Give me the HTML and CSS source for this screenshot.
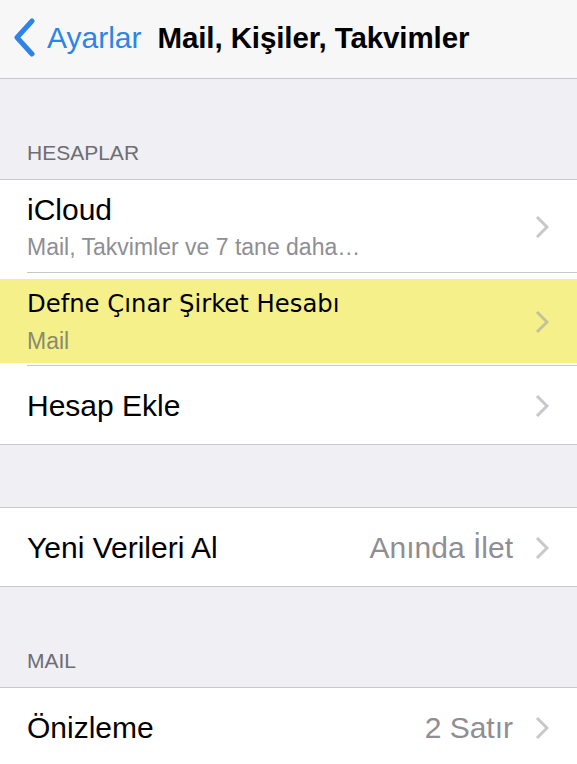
FILE: index.html
```html
<!DOCTYPE html>
<html lang="tr">
<head>
    <meta charset="UTF-8">
    <meta name="viewport" content="width=device-width, initial-scale=1.0">
    <title>Mail, Kişiler, Takvimler</title>
    <link rel="stylesheet" href="styles.css">
</head>
<body>
    <header class="nav">
        <a class="nav-back" href="#">
            <svg class="nav-chevron" width="24" height="40" viewBox="0 0 24 40">
                <polyline points="19,3 4,19.5 19,36" fill="none" stroke="#2d84e8" stroke-width="5" stroke-linecap="round" stroke-linejoin="round"/>
            </svg>
            <span>Ayarlar</span>
        </a>
        <h1 class="nav-title">Mail, Kişiler, Takvimler</h1>
    </header>

    <main class="settings">
        <div class="section-head tall"><span>HESAPLAR</span></div>
        <ul class="group">
            <li class="row tall">
                <div class="row-inner">
                    <div class="row-text">
                        <div class="row-title">iCloud</div>
                        <div class="row-sub">Mail, Takvimler ve 7 tane daha…</div>
                    </div>
                    <svg class="chevron" width="14" height="24" viewBox="0 0 14 24"><polyline points="2,2 12,12 2,22" fill="none" stroke="#c7c7cc" stroke-width="3"/></svg>
                </div>
            </li>
            <li class="row tall">
                <div class="row-inner">
                    <!-- marked account -->
                    <div class="marker">
                        <div class="row-text">
                            <div class="row-title marked">Defne Çınar Şirket Hesabı</div>
                            <div class="row-sub">Mail</div>
                        </div>
                        <svg class="chevron" width="14" height="24" viewBox="0 0 14 24"><polyline points="2,2 12,12 2,22" fill="none" stroke="#c4c29a" stroke-width="3"/></svg>
                    </div>
                </div>
            </li>
            <li class="row">
                <div class="row-inner">
                    <div class="row-title">Hesap Ekle</div>
                    <svg class="chevron" width="14" height="24" viewBox="0 0 14 24"><polyline points="2,2 12,12 2,22" fill="none" stroke="#c7c7cc" stroke-width="3"/></svg>
                </div>
            </li>
        </ul>

        <div class="section-head short"></div>
        <ul class="group">
            <li class="row">
                <div class="row-inner">
                    <div class="row-title">Yeni Verileri Al</div>
                    <div class="row-value">Anında İlet</div>
                    <svg class="chevron" width="14" height="24" viewBox="0 0 14 24"><polyline points="2,2 12,12 2,22" fill="none" stroke="#c7c7cc" stroke-width="3"/></svg>
                </div>
            </li>
        </ul>

        <div class="section-head tall"><span>MAIL</span></div>
        <ul class="group">
            <li class="row">
                <div class="row-inner">
                    <div class="row-title">Önizleme</div>
                    <div class="row-value">2 Satır</div>
                    <svg class="chevron" width="14" height="24" viewBox="0 0 14 24"><polyline points="2,2 12,12 2,22" fill="none" stroke="#c7c7cc" stroke-width="3"/></svg>
                </div>
            </li>
        </ul>
    </main>
</body>
</html>
```

FILE: styles.css
```css
* { box-sizing: border-box; }
body { margin: 0; background: #efeff4; font-family: "Liberation Sans", Arial, sans-serif; color: #000; }

.nav { height: 79px; background: #f7f7f8; border-bottom: 1px solid #c8c7cc; display: flex; align-items: center; padding: 0 0 2px 13px; }
.nav-back { display: flex; align-items: center; color: #2d84e8; text-decoration: none; font-size: 30px; }
.nav-chevron { margin-right: 10px; }
.nav-title { margin: 0 0 0 16px; font-size: 29.5px; font-weight: bold; letter-spacing: -0.1px; }

.section-head { display: flex; align-items: flex-end; padding: 0 0 14px 27px; color: #6d6d72; font-size: 21px; }
.section-head.tall { height: 100px; }
.section-head.short { height: 62px; }

.group { list-style: none; margin: 0; padding: 0; background: #fff; border-top: 1px solid #c8c7cc; border-bottom: 1px solid #c8c7cc; }
.row { padding-left: 27px; }
.row-inner { display: flex; align-items: center; height: 78px; padding: 2px 28px 0 0; border-bottom: 1px solid #c8c7cc; }
.row:last-child .row-inner { border-bottom: none; }
.row.tall .row-inner { height: 93px; padding-top: 2px; }

.row-text { flex: 1; }
.row-title { flex: 1; font-size: 30px; }
.row-sub { margin-top: 7px; font-size: 23px; color: #8e8e93; }
.row-value { font-size: 30px; color: #8e8e93; margin-right: 22px; }
.chevron { flex: none; }

/* highlighted account row, yellow band across the full width */
.marker { display: flex; align-items: center; flex: 1; align-self: stretch; margin: 4px -28px 2px -27px; padding: 2px 28px 0 27px; background: #f6f08a; }
.marker .row-sub { color: #8a8a6e; margin-top: 10px; }
.row-title.marked { font-family: "DejaVu Sans", Verdana, sans-serif; font-size: 24.3px; }
```
